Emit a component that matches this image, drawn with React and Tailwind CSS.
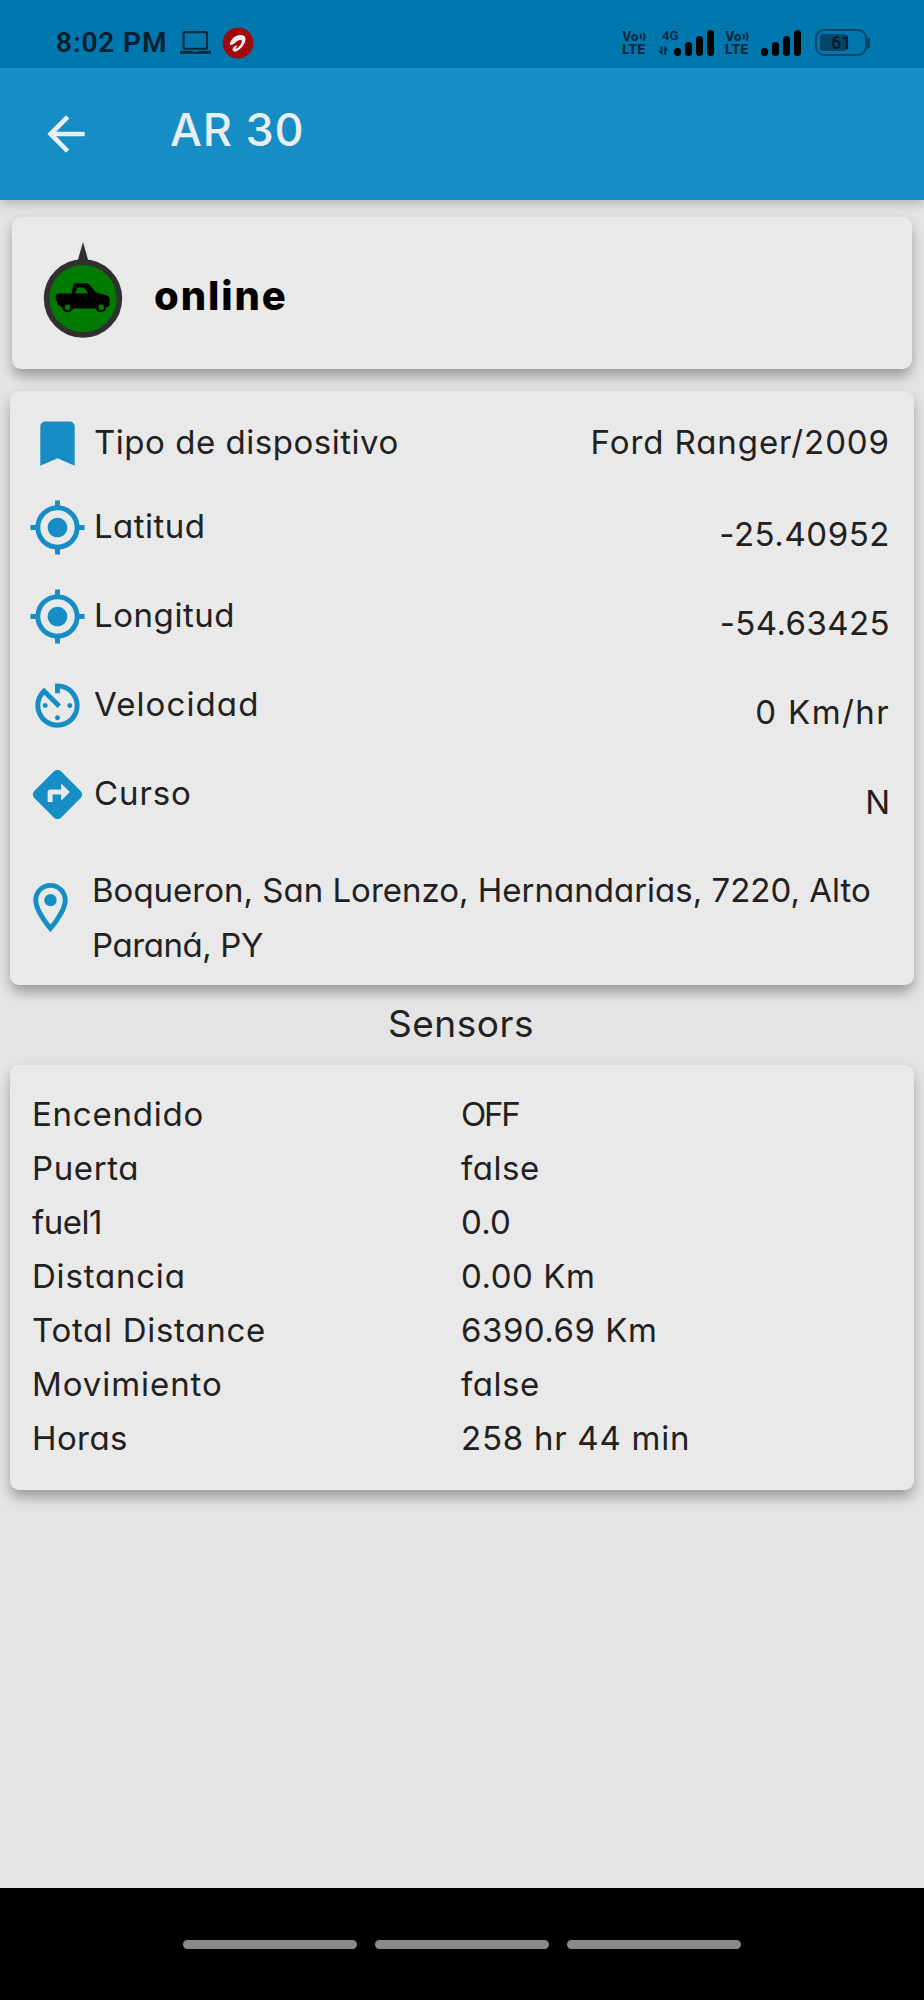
import {
  MdArrowBack,
  MdAvTimer,
  MdBookmark,
  MdDirections,
  MdMyLocation,
  MdOutlineLocationOn,
} from "react-icons/md";

const CARD =
  "rounded-[9px] bg-[#e9e9e9] shadow-[0_9px_13px_-2px_rgba(0,0,0,0.26),0_4px_14px_rgba(0,0,0,0.12)]";

const details = [
  { icon: MdBookmark, label: "Tipo de dispositivo", labelCls: "pb-[2px] tracking-[0.53px]", value: "Ford Ranger/2009", valueCls: "pb-[2px] tracking-[0.92px]", row: "h-20" },
  { icon: MdMyLocation, label: "Latitud", labelCls: "pb-1 tracking-[0.45px]", value: "-25.40952", valueCls: "pt-3 tracking-[0.56px]", row: "h-[89px]" },
  { icon: MdMyLocation, label: "Longitud", labelCls: "pb-1 tracking-[0.55px]", value: "-54.63425", valueCls: "pt-3 tracking-[0.42px]", row: "h-[89px]" },
  { icon: MdAvTimer, label: "Velocidad", labelCls: "pb-[3px] tracking-[1.1px]", value: "0 Km/hr", valueCls: "pt-[13px] tracking-[1.4px]", row: "h-[89px]" },
  { icon: MdDirections, label: "Curso", labelCls: "pb-[3px] tracking-[0.88px]", value: "N", valueCls: "pt-[15px]", row: "h-[89px]" },
];

const sensors = [
  ["Encendido", "tracking-[0.77px]", "OFF", "tracking-[-2.2px]"],
  ["Puerta", "tracking-[0.6px]", "false", "tracking-[0.53px]"],
  ["fuel1", "tracking-[-0.49px]", "0.0", "tracking-[0.17px]"],
  ["Distancia", "tracking-[0.8px]", "0.00 Km", "tracking-[0.54px]"],
  ["Total Distance", "tracking-[0.71px]", "6390.69 Km", "tracking-[0.52px]"],
  ["Movimiento", "tracking-[0.93px]", "false", "tracking-[0.53px]"],
  ["Horas", "tracking-[0.4px]", "258 hr 44 min", "tracking-[0.75px]"],
];

function Volte({ className }) {
  return (
    <svg viewBox="0 0 24 26" className={`h-[26px] w-6 shrink-0 ${className}`} fill="#022a40" fontFamily="Inter, sans-serif" fontWeight="800">
      <text x="0" y="10.5" fontSize="12.5" textLength="16.5" lengthAdjust="spacingAndGlyphs">Vo</text>
      <path d="M18.2 4.2q1.6 2.4 0 4.8M21.3 2.6q2.6 4 0 8" fill="none" stroke="#022a40" strokeWidth="1.9" />
      <text x="0" y="23.5" fontSize="13" textLength="23.5" lengthAdjust="spacingAndGlyphs">LTE</text>
    </svg>
  );
}

function Signal({ className }) {
  return (
    <div className={`flex h-[26px] items-end gap-1 ${className}`}>
      <i className="h-2 w-[7px] rounded-full bg-black" />
      <i className="h-[14px] w-[7px] rounded-full bg-black" />
      <i className="h-5 w-[7px] rounded-full bg-black" />
      <i className="h-[26px] w-[7px] rounded-full bg-black" />
    </div>
  );
}

function StatusBar() {
  return (
    <div className="flex h-[68px] items-center bg-[#0078ae] pt-[17px] pl-14">
      <span className="h-8 w-[124px] font-['Roboto',sans-serif] text-[28px] leading-8 font-semibold tracking-[0.9px] whitespace-nowrap text-[#02202f]">
        8:02 PM
      </span>
      <svg viewBox="0 0 31 24" className="h-6 w-[31px] shrink-0">
        <rect x="3.6" y="1.1" width="23.4" height="16.6" rx="1.2" fill="none" stroke="#02293c" strokeWidth="2.1" />
        <path d="M0 19.8h12.5v1h6v-1H31v3H0z" fill="#02293c" />
      </svg>
      <svg viewBox="0 0 32 32" className="mr-px ml-[11px] h-8 w-8 shrink-0">
        <circle cx="16" cy="16" r="15.4" fill="#a10a0d" />
        <path
          d="M7.900 16.800C8.500 12.500 13 8.200 18.500 8c4.300-.1 6 2.800 4.600 6.700-1.500 4.200-5.300 8.300-9.100 9.700-2.300.8-3.900-.6-3.200-2.800.6-1.900 2.500-3.200 4.500-3-.2 1-1.400 1.900-1.600 2.900 0 1.300 5.200-2.900 6.100-6.200.6-2.200-.8-2.900-2.900-2.100-2.300.9-3.800 2.700-5.500 3.900-1.700 1.200-3.600 1.300-3.500-.3z"
          fill="#f4eded"
        />
      </svg>
      <Volte className="ml-[367px]" />
      <svg viewBox="0 0 22 27" className="mb-[2px] ml-3 h-[27px] w-[22px] shrink-0 overflow-visible" fill="#022a40">
        <text x="4" y="11.500" fontSize="13" fontFamily="Roboto, sans-serif" fontWeight="600" textLength="16.500" lengthAdjust="spacingAndGlyphs">4G</text>
        <path d="M0 23h2.600V18.500h1.900v8.800zM6.300 27V18l4.200 4.300H8.200V27z" />
      </svg>
      <Signal className="-ml-[6px]" />
      <Volte className="ml-[11px]" />
      <Signal className="ml-3" />
      <div className="ml-[14px] flex items-center">
        <div className="relative flex h-[27px] w-[52px] items-center rounded-[9px] border-2 border-[#05476a] p-[3px]">
          <div className="h-[17px] w-[27px] rounded-[3px] bg-[#05476a]" />
          <span className="absolute top-[2px] left-[14px] font-['Roboto',sans-serif] text-[18px] leading-5 font-medium text-[#011b2a]">61</span>
        </div>
        <div className="h-3 w-[3px] rounded-r-full bg-[#05476a]" />
      </div>
    </div>
  );
}

function DeviceMarker() {
  return (
    <svg viewBox="0 0 80 98" className="h-[98px] w-20 shrink-0">
      <path d="M40 2 46 23h-12z" fill="#303030" />
      <circle cx="40" cy="58.500" r="36.400" fill="#007a00" stroke="#303030" strokeWidth="5.600" />
      <path
        fillRule="evenodd"
        d="M16 53.500h12.500l1.800-8.300q.6-2 2.700-2h10q2.200 0 3.600 1.800l6.500 7.500 9.400 2.500q4.200 1.300 4.200 4.600v4.400q0 2.500-2.500 3h-.7a5.600 5.600 0 0 1-10.800 1.500H30a5.600 5.600 0 0 1-10.800-1l-2.700-2q-2.200 0-2.200-2.200v-2.300h-1.500v-5q0-2.500 3.200-2.500zM34 47.500l-1.500 6h12.800l-4.300-6zM24.500 64.500a2.800 2.800 0 1 0 0 5.600 2.800 2.800 0 0 0 0-5.600zM58.200 64.500a2.800 2.800 0 1 0 0 5.600 2.800 2.800 0 0 0 0-5.600z"
        fill="#000"
      />
    </svg>
  );
}

export default function App() {
  return (
    <div className="flex h-[2000px] w-[924px] flex-col overflow-hidden bg-[#e4e4e4] font-['Inter',sans-serif] text-[33px] whitespace-nowrap text-[#212121] [font-feature-settings:'cv11']">
      <header className="relative shadow-[0_4px_10px_rgba(0,0,0,0.2)]">
        <StatusBar />
        <div className="flex h-[132px] items-center bg-[#168dc4] text-[#e9eef1]">
          <MdArrowBack className="ml-[38px] size-14" />
          <h1 className="ml-[76px] pb-[9px] text-[45px] leading-[52px] font-medium tracking-[0.8px]">AR 30</h1>
        </div>
      </header>

      <main className="flex flex-1 flex-col">
        <section className={`mt-[17px] mr-3 ml-3 flex h-[152px] items-center ${CARD}`}>
          <div className="ml-[31px] pb-2">
            <DeviceMarker />
          </div>
          <span className="ml-[31px] pt-[5px] text-[40px] leading-10 font-extrabold tracking-[1.9px] text-black">online</span>
        </section>

        <section className={`mx-[10px] mt-[22px] h-[594px] pt-3 pr-6 pl-[18px] ${CARD}`}>
          {details.map(({ icon: Icon, label, labelCls, value, valueCls, row }) => (
            <div key={label} className={`flex items-center ${row}`}>
              <Icon className="size-[59px] shrink-0 text-[#168dc4]" />
              <span className={`ml-[7px] flex-1 leading-10 ${labelCls}`}>{label}</span>
              <span className={`leading-10 ${valueCls}`}>{value}</span>
            </div>
          ))}
          <div className="mt-6 flex">
            <MdOutlineLocationOn className="mt-[15px] -ml-[7px] size-[59px] shrink-0 text-[#168dc4]" />
            <p className="ml-3 leading-[54.5px]">
              Boqueron, San Lorenzo, Hernandarias, 7220, Alto
              <br />
              <span className="tracking-[-0.42px]">Paraná, PY</span>
            </p>
          </div>
        </section>

        <h2 className="flex h-20 items-center justify-center pr-[2px] pb-[3px] text-[37px] tracking-[0.5px]">Sensors</h2>

        <section className={`mx-[10px] h-[425px] pt-[22px] pl-[22px] ${CARD}`}>
          {sensors.map(([name, nameCls, value, valueCls]) => (
            <div key={name} className="flex h-[54px] items-center leading-10">
              <span className={`w-[429px] ${nameCls}`}>{name}</span>
              <span className={valueCls}>{value}</span>
            </div>
          ))}
        </section>
      </main>

      <nav className="flex h-28 items-start justify-center gap-[18px] bg-black pt-[52px]">
        <i className="h-[9px] w-[174px] rounded-full bg-[#8a8a8a]" />
        <i className="h-[9px] w-[174px] rounded-full bg-[#8a8a8a]" />
        <i className="h-[9px] w-[174px] rounded-full bg-[#8a8a8a]" />
      </nav>
    </div>
  );
}
